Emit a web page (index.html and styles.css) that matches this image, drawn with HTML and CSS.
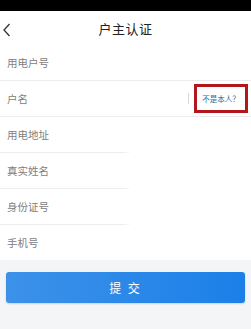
FILE: index.html
```html
<!DOCTYPE html>
<html lang="zh">
<head>
  <meta charset="UTF-8">
  <meta name="viewport" content="width=device-width, initial-scale=1.0">
  <title>户主认证</title>
  <link rel="stylesheet" href="styles.css">
</head>
<body>
  <div class="status-bar"></div>

  <header class="header">
    <svg class="back" width="10" height="14" viewBox="0 0 10 14">
      <path d="M7.5 1 L2 7 L7.5 13" fill="none" stroke="#333" stroke-width="1.3"/>
    </svg>
    <h1>户主认证</h1>
  </header>

  <div class="form">
    <div class="row full"><span class="label">用电户号</span></div>
    <div class="row full">
      <span class="label">户名</span>
      <span class="divider"></span>
      <span class="not-me">不是本人？</span>
    </div>
    <div class="row"><span class="label">用电地址</span></div>
    <div class="row"><span class="label">真实姓名</span></div>
    <div class="row"><span class="label">身份证号</span></div>
    <div class="row last"><span class="label">手机号</span></div>
  </div>

  <div class="actions">
    <button class="submit">提 交</button>
  </div>
</body>
</html>
```

FILE: styles.css
```css
body {
  margin: 0;
  padding: 0;
  font-family: "Noto Sans CJK SC", "Noto Sans", sans-serif;
  background-color: #f4f5f7;
  height: 329px;
  overflow: hidden;
}

.status-bar {
  height: 11px;
  background-color: #000;
}

/* Header */
.header {
  position: relative;
  height: 34px;
  background-color: #fff;
  display: flex;
  align-items: center;
  justify-content: center;
}

.header h1 {
  margin: 0;
  font-size: 13px;
  font-weight: normal;
  color: #222;
  letter-spacing: 0.5px;
}

.back {
  position: absolute;
  left: 2px;
  top: 12px;
}

/* Form rows */
.form {
  background-color: #fff;
}

.row {
  height: 35px;
  display: flex;
  align-items: center;
  padding-left: 7px;
  position: relative;
}

.row::after {
  content: "";
  position: absolute;
  left: 0;
  bottom: -1px;
  width: 132px;
  height: 1px;
  background: linear-gradient(to right, #ececec 92%, rgba(236, 236, 236, 0));
}

.row + .row {
  margin-top: 1px;
}

.row.full::after {
  width: 100%;
  background: #ececec;
}

.row.last::after {
  display: none;
}

.label {
  font-size: 10.5px;
  color: #808080;
}

.divider {
  position: absolute;
  left: 188px;
  top: 12px;
  width: 1px;
  height: 11px;
  background-color: #d8d8d8;
}

.not-me {
  position: absolute;
  left: 194px;
  top: 3px;
  width: 48px;
  height: 23px;
  border: 3px solid #b3161b;
  font-size: 7.5px;
  color: #1d6e9a;
  display: flex;
  align-items: center;
  justify-content: center;
}

/* Submit */
.actions {
  padding: 12px 6px 0 6px;
}

.submit {
  width: 100%;
  height: 31px;
  border: none;
  border-radius: 3px;
  background: linear-gradient(to right, #3d92e8, #1b7fe9);
  color: #fff;
  font-family: inherit;
  font-size: 12px;
  letter-spacing: 2px;
  box-shadow: 0 1px 2px rgba(0, 0, 0, 0.15);
}
```
